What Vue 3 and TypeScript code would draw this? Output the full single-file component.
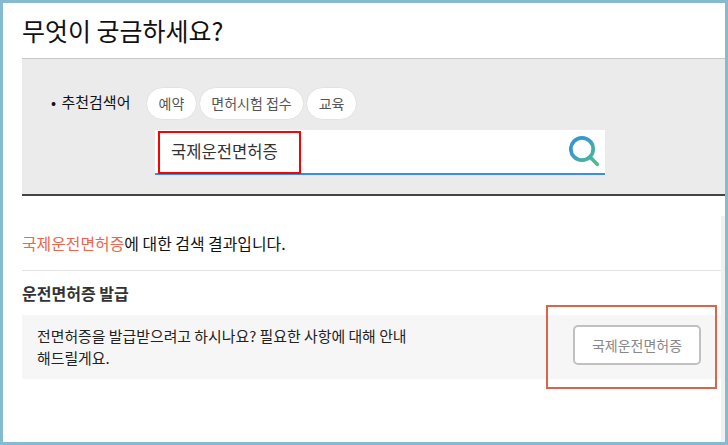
<script setup lang="ts">
const chips: string[] = ['예약', '면허시험 접수', '교육']
const term = '국제운전면허증'
</script>

<template>
  <div class="frame">
    <div class="track"></div>
    <h1 class="title">무엇이 궁금하세요?</h1>
    <section class="band">
      <div class="keywords">
        <span class="label">• 추천검색어</span>
        <div class="chips">
          <span v-for="c in chips" :key="c" class="chip">{{ c }}</span>
        </div>
      </div>
      <div class="search">
        <span class="query">{{ term }}</span>
        <svg class="icon" width="32" height="32" viewBox="0 0 32 32" fill="none">
          <defs>
            <linearGradient id="mag" x1="0" y1="0" x2="1" y2="1">
              <stop offset="0.2" stop-color="#3596d2" />
              <stop offset="1" stop-color="#4cc08c" />
            </linearGradient>
          </defs>
          <path d="M13 2.8a11.2 11.2 0 1 1 0 22.4a11.2 11.2 0 1 1 0-22.4ZM22 23l6.2 6.2" stroke="url(#mag)" stroke-width="3.7" stroke-linecap="round" />
        </svg>
        <span class="mark-red"></span>
      </div>
    </section>
    <p class="result"><em>{{ term }}</em>에 대한 검색 결과입니다.</p>
    <h2 class="heading">운전면허증 발급</h2>
    <div class="card">
      <p class="desc">전면허증을 발급받으려고 하시나요? 필요한 사항에 대해 안내<br />해드릴게요.</p>
      <button class="action" type="button">{{ term }}</button>
      <span class="mark-orange"></span>
    </div>
  </div>
</template>

<style>
html, body { margin: 0; background: #fff; }
</style>

<style scoped>
.frame {
  position: relative;
  box-sizing: border-box;
  width: 728px;
  height: 445px;
  border: 3px solid #85bbd1;
  padding-left: 19px;
  overflow: hidden;
  background: #fff;
  color: #111;
  font-family: "Noto Sans CJK KR", "Noto Sans", sans-serif;
}
.track {
  position: absolute;
  right: 0;
  top: 213px;
  bottom: 0;
  width: 4px;
  background: #f1f1f1;
}
.title {
  margin: 0;
  height: 55px;
  font-size: 25px;
  font-weight: 400;
  line-height: 54px;
}
.band {
  box-sizing: border-box;
  height: 138px;
  background: #ebebeb;
  border-top: 1px solid #c8c8c8;
  border-bottom: 2px solid #444;
  padding-top: 28px;
}
.keywords {
  display: flex;
  padding-left: 29px;
}
.label {
  width: 95px;
  font-size: 15px;
  line-height: 30px;
  word-spacing: 2px;
  color: #111;
}
.chips {
  display: flex;
  gap: 2px;
}
.chip {
  box-sizing: border-box;
  height: 33px;
  padding: 0 11.5px;
  border: 1px solid #e2e2e2;
  border-radius: 17px;
  background: #fff;
  color: #555;
  font-size: 14px;
  line-height: 31px;
}
.search {
  position: relative;
  box-sizing: border-box;
  display: flex;
  align-items: center;
  justify-content: space-between;
  width: 450px;
  height: 45px;
  margin: 10px 0 0 133px;
  padding: 0 4px 2px 16px;
  background: #fff;
  border-bottom: 2px solid #3a8ee6;
}
.query {
  font-size: 16.6px;
  color: #333;
}
.icon {
  display: block;
}
.mark-red {
  position: absolute;
  left: 3px;
  top: 1px;
  width: 143px;
  height: 43px;
  box-sizing: border-box;
  border: 2px solid #f00;
}
.result {
  margin: 0;
  height: 75px;
  box-sizing: border-box;
  padding-top: 35px;
  border-bottom: 1px solid #e3e3e3;
  margin-right: 4px;
  font-size: 15.9px;
  line-height: 26px;
}
.result em {
  font-style: normal;
  color: #f0654c;
}
.heading {
  margin: 0;
  height: 44px;
  font-size: 16px;
  font-weight: 700;
  line-height: 44px;
  color: #333;
}
.card {
  position: relative;
  display: flex;
  align-items: center;
  justify-content: space-between;
  box-sizing: border-box;
  height: 64px;
  margin-right: 4px;
  padding: 0 20px 0 15px;
  background: #f6f6f6;
}
.desc {
  margin: 0;
  font-size: 14.9px;
  line-height: 22px;
  color: #222;
}
.action {
  box-sizing: border-box;
  width: 128px;
  height: 40px;
  margin-bottom: 4px;
  padding: 0;
  border: 2px solid #c0c0c0;
  border-radius: 5px;
  background: #fff;
  color: #888;
  font-family: inherit;
  font-size: 14px;
}
.mark-orange {
  position: absolute;
  left: 524px;
  top: -10px;
  width: 171px;
  height: 84px;
  box-sizing: border-box;
  border: 2px solid #d9654a;
}
</style>
